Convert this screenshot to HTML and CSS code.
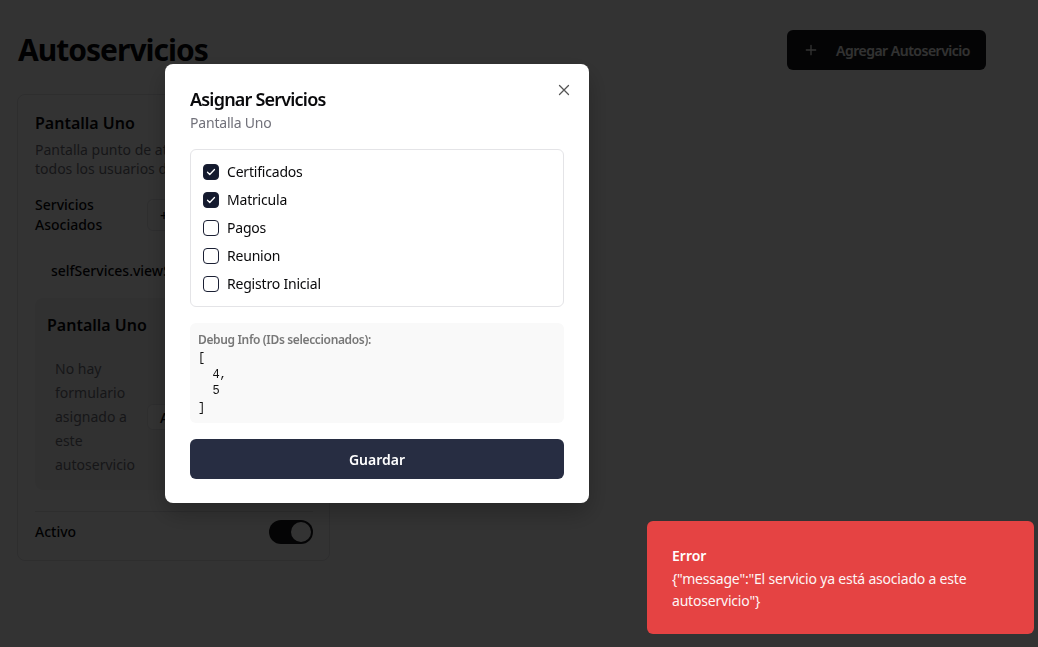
FILE: index.html
```html
<!DOCTYPE html>
<html lang="es">
<head>
<meta charset="utf-8">
<title>Autoservicios</title>
<link rel="stylesheet" href="styles.css">
</head>
<body>
<div class="page">
  <header class="page-header">
    <h1 class="page-title">Autoservicios</h1>
    <button class="btn-primary">
      <svg class="plus" width="16" height="16" viewBox="0 0 24 24" fill="none" stroke="currentColor" stroke-width="2" stroke-linecap="round"><path d="M12 5v14M5 12h14"/></svg>
      <span>Agregar Autoservicio</span>
    </button>
  </header>
  <div class="grid">
    <div class="card">
      <h3 class="card-title">Pantalla Uno</h3>
      <p class="card-desc">Pantalla punto de atención para<br>todos los usuarios del sistema</p>
      <div class="services-row">
        <span class="label">Servicios Asociados</span>
        <button class="btn-outline">+ Asignar</button>
      </div>
      <div class="service-item">selfServices.viewServices</div>
      <div class="inner">
        <h4 class="inner-title">Pantalla Uno</h4>
        <div class="inner-row">
          <span class="empty">No hay formulario asignado a este autoservicio</span>
          <button class="btn-outline small">Asignar</button>
        </div>
      </div>
      <div class="active-row">
        <span class="label">Activo</span>
        <span class="switch"><span class="knob"></span></span>
      </div>
    </div>
  </div>
</div>

<div class="overlay"></div>

<div class="modal">
  <button class="close" aria-label="Cerrar">
    <svg width="12" height="12" viewBox="0 0 12 12" fill="none" stroke="currentColor" stroke-width="1.3" stroke-linecap="round"><path d="M1.5 1.5l9 9M10.5 1.5l-9 9"/></svg>
  </button>
  <h2 class="modal-title">Asignar Servicios</h2>
  <p class="modal-sub">Pantalla Uno</p>
  <div class="check-list">
    <label class="check-item"><span class="box checked"><svg width="12" height="12" viewBox="0 0 24 24" fill="none" stroke="#fff" stroke-width="2.6" stroke-linecap="round" stroke-linejoin="round"><path d="M5 12.5l4.5 4.5L19 7"/></svg></span>Certificados</label>
    <label class="check-item"><span class="box checked"><svg width="12" height="12" viewBox="0 0 24 24" fill="none" stroke="#fff" stroke-width="2.6" stroke-linecap="round" stroke-linejoin="round"><path d="M5 12.5l4.5 4.5L19 7"/></svg></span>Matricula</label>
    <label class="check-item"><span class="box"></span>Pagos</label>
    <label class="check-item"><span class="box"></span>Reunion</label>
    <label class="check-item"><span class="box"></span>Registro Inicial</label>
  </div>
  <div class="debug">
    <div class="debug-title">Debug Info (IDs seleccionados):</div>
    <pre class="debug-pre">[
  4,
  5
]</pre>
  </div>
  <button class="btn-save">Guardar</button>
</div>

<div class="toast">
  <div class="toast-title">Error</div>
  <div class="toast-msg">{"message":"El servicio ya está asociado a este autoservicio"}</div>
</div>
</body>
</html>
```

FILE: styles.css
```css
* { box-sizing: border-box; }
html, body { margin: 0; padding: 0; }
body {
  background: #ffffff;
  color: #09090b;
  font-family: "Noto Sans", "Open Sans", sans-serif;
  font-size: 14px;
  width: 1038px;
  height: 647px;
  overflow: hidden;
}
button { font-family: inherit; }

.page { padding: 30px 52px 0 17px; }
.page-header {
  display: flex;
  justify-content: space-between;
  align-items: center;
  height: 40px;
}
.page-title {
  margin: 0 0 0 1px;
  font-size: 30px;
  line-height: 36px;
  font-weight: 700;
  letter-spacing: -1px;
}
.btn-primary {
  display: flex;
  align-items: center;
  gap: 17px;
  height: 40px;
  width: 199px;
  padding: 0 0 0 16px;
  border: 0;
  border-radius: 6px;
  background: #18181b;
  color: #fafafa;
  font-size: 14px;
  font-weight: 600;
  letter-spacing: -0.5px;
  white-space: nowrap;
}
.grid {
  margin-top: 24px;
  display: grid;
  grid-template-columns: repeat(3, 313px);
  gap: 16px;
}
.card {
  border: 1px solid #e4e4e7;
  border-radius: 8px;
  padding: 16px 16px 16px 17px;
  background: #fff;
  height: 467px;
}
.card-title { margin: 0; font-size: 16px; line-height: 24px; font-weight: 600; }
.card-desc { margin: 5px 0 0; color: #71717a; font-size: 14px; line-height: 19px; }
.services-row {
  margin-top: 17px;
  display: flex;
  align-items: center;
  gap: 16px;
}
.label { font-weight: 500; line-height: 20px; }
.services-row .label { width: 96px; }
.btn-outline {
  height: 32px;
  padding: 0 12px;
  border: 1px solid #e4e4e7;
  border-radius: 6px;
  background: #fff;
  font-size: 14px;
  font-weight: 500;
  color: #09090b;
}
.service-item { margin: 26px 0 0 16px; line-height: 20px; font-weight: 500; }
.inner {
  margin-top: 17px;
  background: #f4f4f5;
  border-radius: 8px;
  padding: 15px 12px;
  height: 192px;
}
.inner-title { margin: 0; font-size: 16px; line-height: 24px; font-weight: 600; }
.inner-row {
  margin-top: 20px;
  display: flex;
  align-items: center;
  gap: 12px;
}
.empty { width: 88px; padding-left: 8px; color: #71717a; line-height: 24px; }
.btn-outline.small { height: 26px; }
.active-row {
  margin-top: 21px;
  border-top: 1px solid #e4e4e7;
  padding-top: 8px;
  display: flex;
  justify-content: space-between;
  align-items: center;
}
.switch {
  width: 44px;
  height: 24px;
  border-radius: 12px;
  background: #18181b;
  display: flex;
  align-items: center;
  justify-content: flex-end;
  padding: 2px;
}
.knob { width: 20px; height: 20px; border-radius: 50%; background: #fff; }

.overlay {
  position: fixed;
  inset: 0;
  background: rgba(0, 0, 0, 0.8);
}

.modal {
  position: fixed;
  left: 165px;
  top: 64px;
  width: 424px;
  padding: 24px 25px;
  background: #fff;
  border-radius: 8px;
  box-shadow: 0 10px 25px rgba(0,0,0,0.25);
}
.close {
  position: absolute;
  top: 20px;
  right: 19px;
  border: 0;
  background: none;
  padding: 0;
  color: #555;
  display: flex;
}
.modal-title { margin: 0; font-size: 18px; line-height: 22px; font-weight: 600; letter-spacing: -0.8px; }
.modal-sub { margin: 3px 0 0; color: #71717a; font-size: 14px; line-height: 20px; letter-spacing: -0.2px; }
.check-list {
  margin-top: 16px;
  border: 1px solid #e4e4e7;
  border-radius: 6px;
  padding: 12px;
  display: flex;
  flex-direction: column;
  gap: 8px;
}
.check-item {
  display: flex;
  align-items: center;
  gap: 8px;
  height: 20px;
  font-size: 14px;
  line-height: 20px;
  letter-spacing: -0.2px;
}
.box {
  width: 16px;
  height: 16px;
  border: 1px solid #1a1f33;
  border-radius: 4px;
  display: flex;
  align-items: center;
  justify-content: center;
  flex: none;
}
.box.checked { background: #141a2e; }
.debug {
  margin-top: 16px;
  background: #f9f9f9;
  border-radius: 6px;
  padding: 9px 8px 7px;
}
.debug-title { font-size: 12px; line-height: 16px; font-weight: 600; color: #777; letter-spacing: -0.35px; }
.debug-pre {
  margin: 2px 0 0;
  font-family: "Liberation Mono", "DejaVu Sans Mono", monospace;
  font-size: 12px;
  line-height: 16.5px;
  color: #111;
}
.btn-save {
  margin-top: 16px;
  width: 100%;
  height: 40px;
  border: 0;
  border-radius: 6px;
  background: #272d42;
  color: #fff;
  font-size: 14px;
  font-weight: 600;
  display: block;
}

.toast {
  position: fixed;
  left: 647px;
  top: 521px;
  width: 387px;
  height: 113px;
  padding: 25px 25px;
  background: #e54343;
  color: #fff;
  border-radius: 6px;
}
.toast-title { font-size: 14px; line-height: 20px; font-weight: 600; }
.toast-msg { margin-top: 2px; font-size: 14px; line-height: 22px; opacity: 0.95; letter-spacing: -0.2px; }
```
